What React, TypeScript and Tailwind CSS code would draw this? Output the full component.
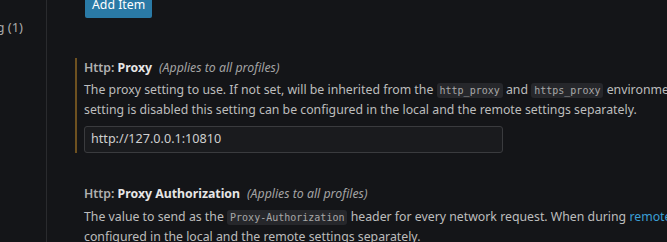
import React from "react";

const Code = ({ children }: { children: React.ReactNode }) => (
  <span
    className="rounded-[3px] bg-[#26272b] px-[3px] py-[2px] text-[10px] text-[#a8a8a8]"
    style={{ fontFamily: '"DejaVu Sans Mono", "Liberation Mono", monospace' }}
  >
    {children}
  </span>
);

export default function App() {
  return (
    <div
      className="flex h-[242px] w-[667px] overflow-hidden bg-[#141518] text-[12.3px] text-[#bdbdbd]"
      style={{ fontFamily: '"Noto Sans", "Open Sans", sans-serif' }}
    >
      <div className="flex w-[47px] shrink-0 justify-end overflow-hidden border-r border-[#2a2b2e] pr-[23px] pt-[16px]">
        <span className="whitespace-nowrap text-[13px] leading-[22px] text-[#a9a9a9]">Proxy Setting (1)</span>
      </div>
      <div className="flex min-w-0 flex-1 flex-col pl-[28px]">
        <div className="ml-[10px] mt-[-7px] flex">
          <button className="flex h-[25px] items-center rounded-[2px] bg-[#2a7aa6] px-[7px] text-[12.3px] text-white">
            Add Item
          </button>
        </div>
        <div className="mt-[40px] border-l-2 border-[#6e5120] pl-[7px]">
          <div className="whitespace-nowrap leading-[19px]">
            <span className="font-semibold text-[#b0b0b0]">Http: </span>
            <span className="font-bold text-[#e6e6e6]">Proxy</span>
            <span className="ml-[7px] italic text-[#a3a3a3]">(Applies to all profiles)</span>
          </div>
          <div className="mt-[3px] whitespace-nowrap leading-[19px]">
            The proxy setting to use. If not set, will be inherited from the <Code>http_proxy</Code> and{" "}
            <Code>https_proxy</Code> environment variables. When during Remote Development the
          </div>
          <div className="whitespace-nowrap leading-[19px]">
            setting is disabled this setting can be configured in the local and the remote settings separately.
          </div>
          <div className="mt-[7px] flex h-[27px] w-[419px] items-center rounded-[3px] border border-[#3a3b3e] bg-[#1a1b1e] pl-[6px] text-[12.6px] text-[#cfcfcf]">
            http://127.0.0.1:10810
          </div>
        </div>
        <div className="mt-[31px] pl-[9px]">
          <div className="whitespace-nowrap leading-[19px]">
            <span className="font-semibold text-[#b0b0b0]">Http: </span>
            <span className="font-bold text-[#e6e6e6]">Proxy Authorization</span>
            <span className="ml-[7px] italic text-[#a3a3a3]">(Applies to all profiles)</span>
          </div>
          <div className="mt-[4px] whitespace-nowrap leading-[19px]">
            The value to send as the <Code>Proxy-Authorization</Code> header for every network request. When during{" "}
            <span className="text-[#3b9fd4]">remote development</span>
          </div>
          <div className="whitespace-nowrap leading-[19px]">
            configured in the local and the remote settings separately.
          </div>
        </div>
      </div>
    </div>
  );
}
